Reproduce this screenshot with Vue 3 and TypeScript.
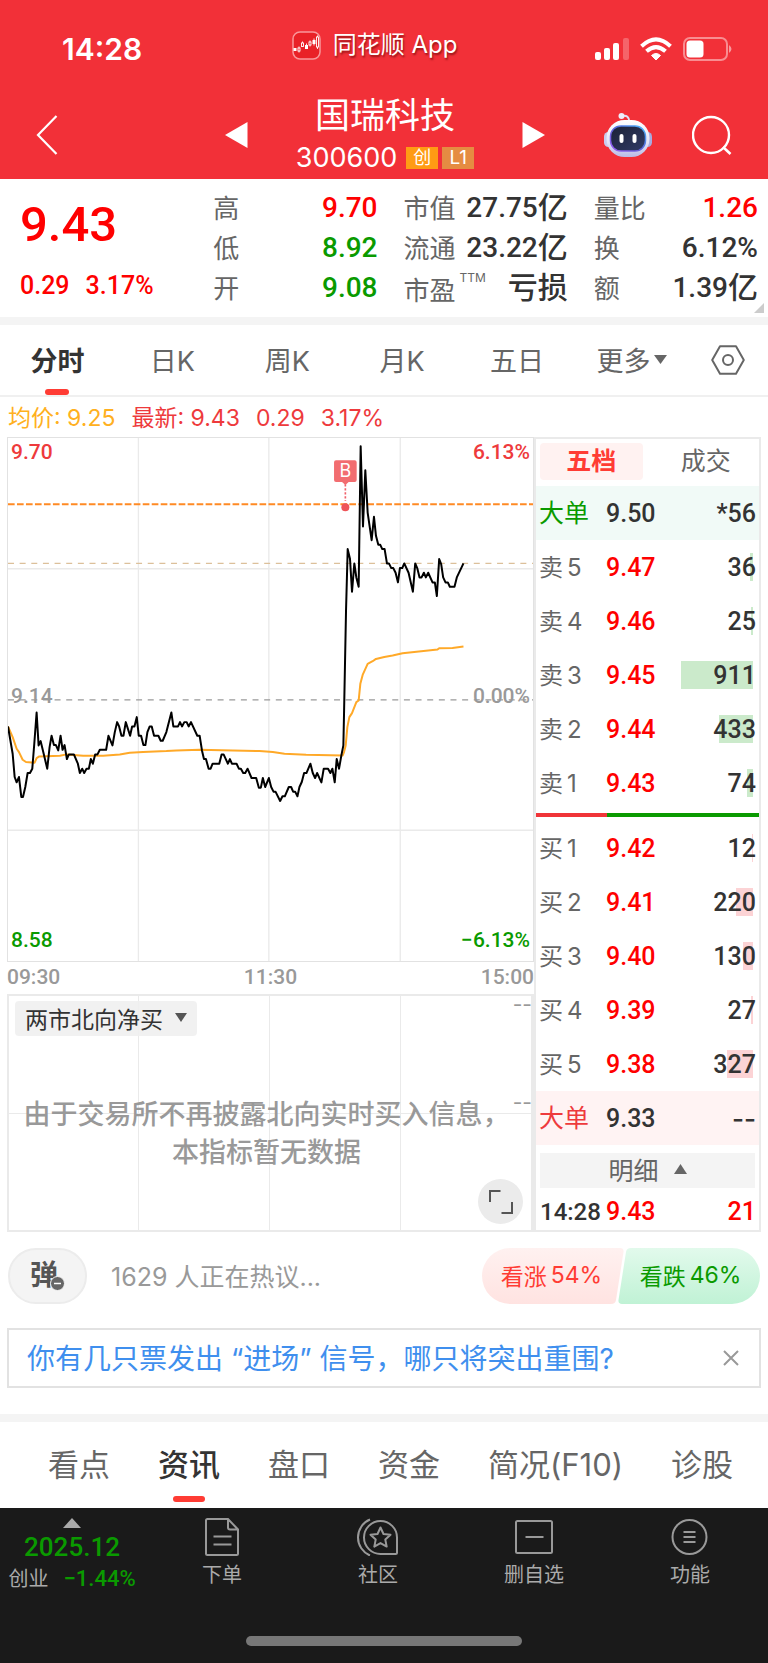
<script setup lang="ts">
interface Stat { label: string; sup?: string; value: string; unit?: string; tone: 'up' | 'down' | 'flat' }
interface Level { side: string; level: number; price: string; volume: number }

const statColumns: Stat[][] = [
  [
    { label: '高', value: '9.70', tone: 'up' },
    { label: '低', value: '8.92', tone: 'down' },
    { label: '开', value: '9.08', tone: 'down' },
  ],
  [
    { label: '市值', value: '27.75', unit: '亿', tone: 'flat' },
    { label: '流通', value: '23.22', unit: '亿', tone: 'flat' },
    { label: '市盈', sup: 'TTM', value: '', unit: '亏损', tone: 'flat' },
  ],
  [
    { label: '量比', value: '1.26', tone: 'up' },
    { label: '换', value: '6.12%', tone: 'flat' },
    { label: '额', value: '1.39', unit: '亿', tone: 'flat' },
  ],
]

const periods = ['分时', '日K', '周K', '月K', '五日']

const asks: Level[] = [
  { side: '卖', level: 5, price: '9.47', volume: 36 },
  { side: '卖', level: 4, price: '9.46', volume: 25 },
  { side: '卖', level: 3, price: '9.45', volume: 911 },
  { side: '卖', level: 2, price: '9.44', volume: 433 },
  { side: '卖', level: 1, price: '9.43', volume: 74 },
]
const bids: Level[] = [
  { side: '买', level: 1, price: '9.42', volume: 12 },
  { side: '买', level: 2, price: '9.41', volume: 220 },
  { side: '买', level: 3, price: '9.40', volume: 130 },
  { side: '买', level: 4, price: '9.39', volume: 27 },
  { side: '买', level: 5, price: '9.38', volume: 327 },
]
const maxVolume = Math.max(...asks.concat(bids).map((l) => l.volume))
const barWidth = (volume: number): string => `${Math.max(1, Math.round((volume / maxVolume) * 72))}px`

const sections = ['看点', '资讯', '盘口', '资金', '简况(F10)', '诊股']

const priceLine =
  '24,888 38,970 44,1040 50,1056 57,1040 64,1100 69,1100 76,1070 83,1028 90,1028 97,1015 103,940 110,846 116,945 122,932 130,965 142,1015 149,950 155,916 162,944 168,944 175,960 182,916 188,958 194,944 201,986 207,972 222,972 234,1000 240,1028 247,1015 253,1028 260,1015 267,1015 273,986 279,1000 286,972 293,972 300,958 319,958 326,916 338,945 345,905 352,875 358,888 365,916 371,916 378,875 391,916 397,888 404,888 411,860 417,916 424,916 431,944 437,944 443,905 450,888 456,888 463,916 476,916 483,931 489,931 500,905 515,846 521,888 535,888 541,875 547,888 554,875 561,875 567,888 574,875 593,916 600,916 607,960 613,986 619,986 627,1015 633,1015 639,1000 659,1000 666,972 672,972 685,1000 691,986 697,1000 711,1000 718,1015 724,1015 731,1028 737,1028 744,1015 756,1043 770,1043 778,1072 784,1072 790,1043 797,1070 808,1043 815,1070 822,1084 828,1084 842,1112 849,1098 856,1098 868,1070 875,1070 881,1084 887,1084 894,1098 900,1070 907,1055 914,1028 921,1028 933,1000 940,1028 947,1043 953,1028 966,1056 973,1015 986,1015 993,1028 999,1015 1006,1056 1012,986 1019,1015 1026,975 1032,945 1034,850 1040,540 1045,355 1052,385 1058,483 1065,398 1071,440 1078,468 1084,46 1091,287 1098,118 1105,245 1117,328 1124,258 1130,315 1137,342 1143,342 1149,355 1156,355 1163,398 1169,398 1176,412 1182,412 1189,426 1196,455 1202,412 1209,412 1215,398 1228,426 1241,483 1248,398 1254,412 1261,440 1267,440 1274,426 1280,440 1287,426 1300,455 1307,455 1313,496 1320,385 1326,400 1332,440 1339,455 1346,455 1352,468 1366,468 1373,440 1393,398'
const averageLine =
  '24,888 38,920 50,955 57,965 68,988 78,995 104,997 110,983 118,978 180,976 200,972 250,976 310,976 360,972 390,967 430,965 500,962 530,960 600,958 700,960 780,962 820,965 855,970 920,973 1030,975 1034,965 1039,945 1044,890 1050,860 1058,848 1071,815 1078,810 1083,760 1090,733 1105,700 1120,692 1130,685 1155,679 1180,675 1210,668 1245,664 1315,657 1320,653 1360,652 1393,648'
</script>

<template>
  <div class="page">
    <header class="top">
      <div class="status">
        <time class="clock">14:28</time>
        <div class="app-tag">
          <svg class="app-logo" viewBox="0 0 29 29" aria-hidden="true">
            <rect x="1" y="1" width="27" height="27" rx="7" fill="#e92127" stroke="#f9979a" stroke-width="1.5" />
            <g fill="#fff" stroke="none">
              <rect x="1.500" y="17" width="3" height="3" /><rect x="13" y="14" width="3" height="4" /><rect x="20.500" y="9" width="3" height="4" />
            </g>
            <g fill="none" stroke="#fff" stroke-width=".9">
              <rect x="6" y="17" width="2" height="3" /><rect x="9.500" y="12" width="2" height="3.500" /><rect x="17" y="11" width="2" height="3" /><rect x="24.500" y="6" width="2" height="10" />
              <path d="M7 15.500V17M7 20v1.500M10.500 10.500V12M14.500 12.500V14M18 9.500V11M18 14v1.500M22 7.500V9M22 13v1.500M25.500 4.500V6M25.500 16v2" />
            </g>
          </svg>
          <span>同花顺 App</span>
        </div>
        <svg class="status-icons" viewBox="0 0 137 24" aria-hidden="true">
          <g fill="#fff">
            <rect x="0" y="15" width="6" height="8" rx="2" />
            <rect x="9" y="11" width="6" height="12" rx="2" />
            <rect x="18" y="6" width="6" height="17" rx="2" />
            <rect x="28" y="1" width="6" height="22" rx="2" opacity=".25" />
            <path d="M61 23 L56.500 18.500 Q61 14.500 65.500 18.500Z" stroke="#fff" stroke-linejoin="round" />
          </g>
          <g fill="none" stroke="#fff" stroke-width="4">
            <path d="M46.500 9.200Q61 -4.500 75.500 9.200" />
            <path d="M51.500 14.300Q61 5.800 70.500 14.300" />
          </g>
          <rect x="89" y="1" width="43" height="22" rx="6" fill="none" stroke="#fff" stroke-width="2" opacity=".45" />
          <rect x="91.500" y="3.500" width="17" height="17" rx="3.500" fill="#fff" />
          <path d="M134 8q5 4 0 8z" fill="#fff" opacity=".5" />
        </svg>
      </div>
      <nav class="nav" aria-label="个股导航">
        <button class="icon-btn" type="button" aria-label="返回">
          <svg width="22" height="40" viewBox="0 0 22 40"><path d="M20.500 1 2 20 20.500 39" fill="none" stroke="#fff" stroke-width="2.200" /></svg>
        </button>
        <div class="switcher">
          <button class="icon-btn" type="button" aria-label="上一只"><svg width="23" height="26" viewBox="0 0 23 26"><path d="M0 13 22.500 0v26z" fill="#fff" /></svg></button>
          <div class="stock">
            <h1>国瑞科技</h1>
            <div class="code"><span>300600</span><i class="badge">创</i><i class="badge l1">L1</i></div>
          </div>
          <button class="icon-btn" type="button" aria-label="下一只"><svg width="23" height="26" viewBox="0 0 23 26"><path d="M23 13 .5 0v26z" fill="#fff" /></svg></button>
        </div>
        <div class="nav-right">
          <button class="icon-btn" type="button" aria-label="助手">
            <svg width="48" height="46" viewBox="0 0 48 46">
              <defs>
                <linearGradient id="shell" x1="0" y1="0" x2="0" y2="1"><stop offset="0" stop-color="#fff" /><stop offset=".6" stop-color="#e2e3f6" /><stop offset="1" stop-color="#b9bbe6" /></linearGradient>
                <linearGradient id="visor" x1="0" y1="0" x2="1" y2="1"><stop offset="0" stop-color="#1b2236" /><stop offset="1" stop-color="#313a66" /></linearGradient>
                <linearGradient id="rim" x1="0" y1="1" x2="1" y2="0"><stop offset="0" stop-color="#9a5cf0" /><stop offset=".5" stop-color="#5a62d8" /><stop offset="1" stop-color="#49b9ff" /></linearGradient>
              </defs>
              <path d="M18 4c5-1 7 1 7.500 6" fill="none" stroke="#dfe0f5" stroke-width="2" />
              <circle cx="17.500" cy="4" r="3" fill="#eeeefa" />
              <rect x="0" y="20" width="9" height="15" rx="4.500" fill="#c9cbee" />
              <rect x="39" y="20" width="9" height="15" rx="4.500" fill="#a7aae0" />
              <rect x="2.500" y="8" width="43" height="37" rx="18" fill="url(#shell)" />
              <rect x="6.500" y="14" width="35" height="25" rx="10.500" fill="url(#visor)" stroke="url(#rim)" stroke-width="1.500" />
              <rect x="15.500" y="22" width="4" height="9" rx="2" fill="#fff" />
              <rect x="28.500" y="22" width="4" height="9" rx="2" fill="#fff" />
            </svg>
          </button>
          <button class="icon-btn" type="button" aria-label="搜索">
            <svg width="40" height="40" viewBox="0 0 40 40"><circle cx="19" cy="20" r="18" fill="none" stroke="#fff" stroke-width="2.400" /><path d="m31 32 7.500 7" stroke="#fff" stroke-width="2.600" /></svg>
          </button>
        </div>
      </nav>
    </header>

    <section class="quote">
      <div class="last up">
        <strong>9.43</strong>
        <div class="change"><span>0.29</span><span>3.17%</span></div>
      </div>
      <dl v-for="(column, i) in statColumns" :key="i">
        <div v-for="s in column" :key="s.label">
          <dt>{{ s.label }}<sup v-if="s.sup">{{ s.sup }}</sup></dt>
          <dd :class="s.tone">{{ s.value }}<span v-if="s.unit">{{ s.unit }}</span></dd>
        </div>
      </dl>
      <i class="corner"></i>
    </section>

    <nav class="periods" aria-label="周期">
      <button v-for="(p, i) in periods" :key="p" type="button" :class="{ active: i === 0 }">{{ p }}</button>
      <button type="button">更多<svg width="13" height="9" viewBox="0 0 13 9"><path d="M0 0h13L6.500 9z" fill="#666" /></svg></button>
      <button type="button" aria-label="设置">
        <svg width="34" height="30" viewBox="0 0 34 30" fill="none" stroke="#666" stroke-width="2"><path d="M9 1.200h16L32.800 15 25 28.800H9L1.200 15z" stroke-linejoin="round" /><circle cx="17" cy="15" r="5" /></svg>
      </button>
    </nav>

    <p class="legend"><span class="avg">均价: 9.25</span><span>最新: 9.43</span><span>0.29</span><span>3.17%</span></p>

    <main class="board">
      <div class="charts">
        <div class="chart">
          <svg viewBox="24 21 1578 1572" preserveAspectRatio="none" role="img" aria-label="分时走势">
            <g stroke="#eaeaea" stroke-width="4" fill="none">
              <path d="M416 21V1593M808 21V1593M1203 21V1593M24 414H1602M24 1200H1602" />
            </g>
            <path d="M24 220H1602" stroke="#ff8a24" stroke-width="6" stroke-dasharray="20 7" />
            <path d="M24 398H1602" stroke="#dcc09a" stroke-width="4" stroke-dasharray="18 17" />
            <path d="M24 808H1602" stroke="#999" stroke-width="4" stroke-dasharray="18 17" />
            <polyline :points="averageLine" fill="none" stroke="#ffa928" stroke-width="6" stroke-linejoin="round" />
            <polyline :points="priceLine" fill="none" stroke="#000" stroke-width="6" stroke-linejoin="round" />
            <path d="M1038 160V210" stroke="#f0606a" stroke-width="5" stroke-dasharray="7 5" />
            <path d="M1010 88h56q6 0 6 6v53q0 6-6 6h-18l-10 9-10-9h-18q-6 0-6-6V94q0-6 6-6z" fill="#f26d70" />
            <circle cx="1038" cy="229" r="12" fill="#ee5458" />
            <text x="1038" y="139" text-anchor="middle" fill="#fff" font-size="54">B</text>
          </svg>
          <span class="tag tl up2">9.70</span><span class="tag tr up2">6.13%</span>
          <span class="tag ml">9.14</span><span class="tag mr">0.00%</span>
          <span class="tag bl down">8.58</span><span class="tag br down">−6.13%</span>
        </div>
        <div class="axis"><span>09:30</span><span>11:30</span><span>15:00</span></div>
        <div class="sub">
          <button class="indicator" type="button">两市北向净买<svg width="12" height="9" viewBox="0 0 12 9"><path d="M0 0h12L6 9z" fill="#555" /></svg></button>
          <p>由于交易所不再披露北向实时买入信息，<br />本指标暂无数据</p>
          <span class="dash d1">--</span><span class="dash d2">--</span>
          <button class="expand" type="button" aria-label="全屏"><svg width="24" height="24" viewBox="0 0 24 24" fill="none" stroke="#555" stroke-width="2"><path d="M1 12V1h10.500M23 12v11H12.500" /></svg></button>
        </div>
      </div>

      <aside class="book">
        <div class="book-tabs"><button class="active" type="button">五档</button><button type="button">成交</button></div>
        <table>
          <tbody>
            <tr class="big sell"><th scope="row">大单</th><td>9.50</td><td class="vol">*56</td></tr>
            <tr v-for="l in asks" :key="l.price">
              <th scope="row">{{ l.side }}<b>{{ l.level }}</b></th><td class="up">{{ l.price }}</td>
              <td class="vol"><i class="bar ask" :style="{ width: barWidth(l.volume) }"></i><span>{{ l.volume }}</span></td>
            </tr>
          </tbody>
        </table>
        <div class="ratio"></div>
        <table>
          <tbody>
            <tr v-for="l in bids" :key="l.price">
              <th scope="row">{{ l.side }}<b>{{ l.level }}</b></th><td class="up">{{ l.price }}</td>
              <td class="vol"><i class="bar bid" :style="{ width: barWidth(l.volume) }"></i><span>{{ l.volume }}</span></td>
            </tr>
            <tr class="big buy"><th scope="row">大单</th><td>9.33</td><td class="vol none">--</td></tr>
          </tbody>
        </table>
        <button class="detail" type="button">明细<svg width="13" height="10" viewBox="0 0 13 10"><path d="M0 10h13L6.500 0z" fill="#666" /></svg></button>
        <div class="tick"><time>14:28</time><span class="up">9.43</span><span class="up qty">21</span></div>
      </aside>
    </main>

    <section class="talk">
      <button class="danmu" type="button" aria-label="弹幕">弹<svg width="15" height="15" viewBox="0 0 15 15"><circle cx="7.500" cy="7.500" r="7" fill="#666" stroke="#f4f4f4" /><path d="M4 7.500h7" stroke="#fff" stroke-width="1.500" /></svg></button>
      <span class="hot">1629 人正在热议...</span>
      <div class="votes">
        <svg viewBox="0 0 278 56" preserveAspectRatio="none" aria-hidden="true">
          <defs>
            <linearGradient id="rise" x1="0" y1="0" x2="0" y2="1"><stop offset="0" stop-color="#fff1f0" /><stop offset="1" stop-color="#ffe3e1" /></linearGradient>
            <linearGradient id="fall" x1="0" y1="0" x2="0" y2="1"><stop offset="0" stop-color="#e2faec" /><stop offset="1" stop-color="#c0f2d5" /></linearGradient>
          </defs>
          <path d="M28 0H138q4 0 3.500 4L134 52q-.6 4-5 4H28a28 28 0 0 1 0-56z" fill="url(#rise)" />
          <path d="M149 0H250a28 28 0 0 1 0 56H140q-4 0-3.500-4L144 4q.6-4 5-4z" fill="url(#fall)" />
        </svg>
        <button class="rise" type="button"><span>看涨</span><span>54%</span></button><button class="fall" type="button"><span>看跌</span><span>46%</span></button>
      </div>
    </section>

    <section class="promo">
      <a href="#">你有几只票发出 “进场” 信号，哪只将突出重围?</a>
      <button class="icon-btn" type="button" aria-label="关闭"><svg width="16" height="16" viewBox="0 0 16 16"><path d="m1 1 14 14M15 1 1 15" stroke="#999" stroke-width="2" /></svg></button>
    </section>

    <nav class="sections" aria-label="栏目">
      <button v-for="(s, i) in sections" :key="s" type="button" :class="{ active: i === 1 }">{{ s }}</button>
    </nav>

    <footer>
      <div class="tools">
        <button class="index" type="button">
          <svg width="18" height="10" viewBox="0 0 18 10"><path d="M0 10h18L9 0z" fill="#aaa" /></svg>
          <strong>2025.12</strong>
          <span class="idx-row"><span>创业</span><em>−1.44%</em></span>
        </button>
        <button type="button">
          <svg width="36" height="38" viewBox="0 0 36 38"><path d="M24 1H3.500Q2 1 2 2.500v33Q2 37 3.500 37h29q1.500 0 1.500-1.500V11.500L24 1v8.500q0 2 2 2h8M9.500 18.500h18M9.500 26.500h18" /></svg>下单
        </button>
        <button type="button">
          <svg width="42" height="38" viewBox="0 0 42 38"><path d="M13 1.500a19.500 19.500 0 0 0 0 36M23.500 3A16.500 16.500 0 1 0 23.500 36H38.500Q40 36 40 34.500V19.500A16.500 16.500 0 0 0 23.500 3z" /><path stroke-linejoin="round" d="m23.500 9.500 3 6.500 7 .8-5.200 4.800 1.400 7-6.200-3.500-6.200 3.500 1.400-7-5.200-4.800 7-.8z" /></svg>社区
        </button>
        <button type="button">
          <svg width="40" height="38" viewBox="0 0 40 38"><rect x="2" y="3" width="36" height="32" rx="1.500" /><path d="M11.500 19h18" /></svg>删自选
        </button>
        <button type="button">
          <svg width="38" height="38" viewBox="0 0 38 38"><circle cx="18.500" cy="19" r="17" /><path d="M12.500 14h12M12.500 19h12M12.500 24h12" /></svg>功能
        </button>
      </div>
      <i class="home"></i>
    </footer>
  </div>
</template>

<style>
body { margin: 0; background: #fff; }
</style>

<style scoped>
.page { font-family: Inter, "Noto Sans CJK SC", sans-serif; color: #333; background: #fff; }
.page * { box-sizing: border-box; }
button { border: 0; padding: 0; margin: 0; background: none; font: inherit; color: inherit; white-space: nowrap; }
i, em { font-style: normal; }
h1, p, dl, dd { margin: 0; }
svg { display: block; flex: none; }
.icon-btn { display: flex; }
.up { color: #ff0000; }
.up2 { color: #ee3a3c; }
.down { color: #0a9a00; }

.top { background: #f23038; color: #fff; height: 179px; }
.status { display: flex; justify-content: space-between; align-items: center; padding: 30px 36px 0 62px; height: 68px; }
.clock { font-size: 30px; font-weight: 600; line-height: 38px; }
.app-tag { display: flex; align-items: center; gap: 12px; margin-left: 12px; font-size: 24px; line-height: 30px; padding-bottom: 8px; text-shadow: 1px 2px 2px rgba(90, 0, 0, .6); }
.app-logo { width: 29px; height: 29px; }
.status-icons { width: 137px; height: 24px; }
.nav { display: grid; grid-template-columns: 1fr auto 1fr; align-items: center; height: 111px; padding: 22px 36px 0; }
.nav .icon-btn { width: fit-content; }
.switcher { display: flex; align-items: center; gap: 48px; padding-left: 2px; }
.stock { text-align: center; padding-top: 4px; }
h1 { font-size: 35px; font-weight: 400; line-height: 42px; }
.code { display: flex; align-items: center; gap: 4px; font-size: 27px; line-height: 36px; height: 44px; }
.code span { margin-right: 5px; }
.badge { width: 32px; height: 22px; font-size: 18px; line-height: 22px; background: #ff9b14; }
.l1 { background: #e58c42; font-size: 19px; }
.nav-right { display: flex; justify-content: flex-end; align-items: center; gap: 40px; }

.quote { position: relative; display: grid; grid-template-columns: 167fr 164fr 164fr 164fr; column-gap: 26px; padding: 9px 10px 9px 20px; border-bottom: 8px solid #f4f4f4; height: 146px; font-family: Roboto, "Noto Sans CJK SC", sans-serif; }
.last strong { display: block; font-size: 49px; font-weight: 500; line-height: 74px; }
.change { display: flex; gap: 16px; font-size: 25px; font-weight: 500; line-height: 48px; }
dl > div { display: flex; justify-content: space-between; align-items: center; height: 40px; }
dt { font-size: 26px; color: #666; display: flex; white-space: nowrap; padding-bottom: 4px; }
dl > div:has(sup) dt { padding-bottom: 0; }
sup { font: 12px/16px Inter, sans-serif; vertical-align: top; margin-left: 4px; }
dd { font-size: 28px; font-weight: 500; display: flex; align-items: center; line-height: 40px; white-space: nowrap; }
dd span { font-size: 30px; }
.corner { position: absolute; right: 4px; bottom: 4px; border: solid transparent; border-width: 10px 0 0 10px; border-right: 0; width: 0; height: 0; border-top: 0; border-bottom: 10px solid #ccc; }

.periods { display: grid; grid-template-columns: repeat(6, 15%) 1fr; height: 72px; padding-right: 2px; border-bottom: 2px solid #f0f0f0; font-size: 27px; color: #666; }
.periods button { position: relative; display: flex; align-items: center; justify-content: center; gap: 4px; padding-bottom: 1px; }
.active { font-weight: 500; color: #333; }
.periods .active { font-weight: 700; }
.periods .active::after, .sections .active::after { content: ""; position: absolute; bottom: 0; left: 50%; width: 24px; height: 6px; margin-left: -12px; border-radius: 3px; background: #ff3c34; }
.legend { display: flex; gap: 16px; padding: 0 8px; height: 40px; font-size: 23px; line-height: 42px; color: #ee3a3c; }
.legend span { white-space: nowrap; }
.legend .avg { color: #ffb020; }

.board { display: grid; grid-template-columns: 527fr 227fr; padding: 0 7px; }
.charts, .book { min-width: 0; }
.chart { position: relative; height: 525px; border: 1px solid #e2e2e2; }
.chart svg { width: 100%; height: 100%; }
.tag, .axis { font: 500 21px/26px Roboto, sans-serif; }
.tag { position: absolute; }
.tl, .ml, .bl { left: 3px; }
.tr, .mr, .br { right: 3px; }
.tl, .tr { top: 1px; }
.ml, .mr { top: 245px; color: #999; }
.bl, .br { bottom: 8px; }
.axis { display: grid; grid-template-columns: 1fr 1fr 1fr; height: 32px; line-height: 30px; color: #999; }
.axis span:nth-child(2) { text-align: center; }
.axis span:nth-child(3) { text-align: right; }
.sub { position: relative; height: 238px; border: 2px solid #eaeaea; background: linear-gradient(90deg, #eaeaea 1px, transparent 1px) 129px 0 / 131px 100%, linear-gradient(#eaeaea 1px, transparent 1px) 0 117px / 100% 400px; padding: 5px 6px; }
.indicator { display: flex; align-items: center; gap: 12px; height: 35px; padding: 0 10px 2px; border-radius: 4px; background: rgba(240, 240, 240, .9); font-size: 23px; }
.sub p { margin: 60px 2px 0 -6px; text-align: center; font-size: 27px; line-height: 38px; color: #999; font-weight: 500; white-space: nowrap; }
.dash { position: absolute; right: 0; font-size: 21px; line-height: 20px; color: #999; }
.d1 { top: -1px; }
.d2 { top: 97px; }
.expand { position: absolute; right: 9px; bottom: 6px; width: 45px; height: 45px; border-radius: 50%; background: #ebebeb; display: flex; align-items: center; justify-content: center; }

.book { border: 2px solid #eaeaea; font-size: 24px; }
.book-tabs { display: grid; grid-template-columns: 1fr 1fr; gap: 12px; padding: 4px 2px 6px 4px; height: 47px; font-size: 25px; color: #666; }
.book-tabs button { padding-bottom: 1px; line-height: 34px; }
.book-tabs .active { background: #fff2f1; color: #ff3c34; border-radius: 4px; font-weight: 700; }
table { width: 100%; border-collapse: collapse; table-layout: fixed; }
tr { height: 54px; }
th { width: 70px; padding: 0 0 4px 3px; text-align: left; font-weight: 400; color: #666; white-space: nowrap; }
th b { font-weight: 400; margin-left: 4px; }
td { padding: 2px 0 0; font: 500 25px/32px Roboto, sans-serif; }
.vol { position: relative; width: 92px; padding-right: 3px; text-align: right; }
.vol.none { font-family: Inter, sans-serif; font-size: 26px; }
.vol span { position: relative; }
.bar { position: absolute; right: 6px; top: 13px; height: 28px; }
.ask { background: #cbeacb; }
.bid { background: #fcd3d5; }
.big th { font-size: 25px; }
.sell { background: #f1faf7; }
.sell th { color: #0a9a00; }
.buy { background: #fff3f3; }
.buy th { color: #ee3a3c; }
.ratio { height: 4px; margin: 3px 0 4px; background: linear-gradient(90deg, #f03438 32%, #0a9a00 32%); }
.detail { display: flex; align-items: center; justify-content: center; gap: 15px; width: calc(100% - 8px); height: 35px; margin: 8px 4px 0; padding-bottom: 3px; background: #f4f4f4; font-size: 25px; color: #666; }
.tick { display: grid; grid-template-columns: 66px 1fr auto; padding: 0 3px 0 4px; height: 41px; font: 500 25px/48px Roboto, sans-serif; }
.tick time { font-size: 24px; }

.talk { display: flex; align-items: center; height: 96px; padding: 0 8px 8px; }
.danmu { display: flex; align-items: center; justify-content: center; width: 79px; height: 56px; border: 2px solid #ececec; border-radius: 28px; background: #f4f4f4; font-size: 28px; line-height: 40px; padding-bottom: 3px; font-weight: 700; color: #555; }
.danmu svg { margin: 18px 0 0 -8px; }
.hot { flex: 1; margin-left: 24px; padding-bottom: 2px; font-size: 25px; color: #999; }
.votes { position: relative; display: grid; grid-template-columns: 1fr 1fr; width: 278px; height: 56px; font-size: 23px; }
.votes svg { position: absolute; inset: 0; width: 100%; height: 100%; }
.votes button { position: relative; display: flex; align-items: center; justify-content: center; gap: 4px; padding-bottom: 2px; }
.rise { color: #ff3c34; }
.fall { color: #0a9a00; }

.promo { display: flex; align-items: center; justify-content: space-between; height: 60px; margin: 0 7px 26px; padding: 0 20px 0 18px; border: 2px solid #e2e2e2; }
.promo a { color: #3f8fee; font-size: 28px; line-height: 40px; padding-top: 2px; text-decoration: none; white-space: nowrap; }

.sections { display: flex; gap: 48px; height: 94px; padding: 0 36px 0 48px; border-top: 8px solid #f4f4f4; font-size: 31px; color: #666; }
.sections button { position: relative; padding-bottom: 6px; }
.sections .active::after { width: 32px; margin-left: -16px; bottom: 6px; }

footer { background: #1a1a1a; color: #aaa; height: 155px; }
.tools { display: grid; grid-template-columns: 144fr 156fr 156fr 156fr 156fr; height: 128px; padding-top: 10px; font-size: 20px; line-height: 28px; }
.tools button { display: flex; flex-direction: column; align-items: center; gap: 5px; }
.tools button:not(.index) svg { fill: none; stroke: #999; stroke-width: 2; }
.tools .index { gap: 0; font-family: Roboto, "Noto Sans CJK SC", sans-serif; }
.index strong { font-size: 26px; line-height: 38px; font-weight: 500; color: #0a9a00; }
.idx-row { line-height: 26px; }
.index em { margin-left: 15px; font-size: 22px; font-weight: 500; color: #0a9a00; }
.home { display: block; width: 36%; height: 10px; margin: 0 auto; border-radius: 5px; background: #777; }
</style>
